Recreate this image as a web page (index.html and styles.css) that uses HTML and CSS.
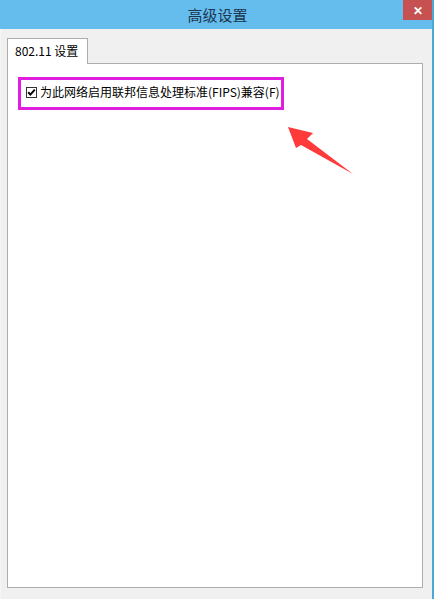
FILE: index.html
```html
<!DOCTYPE html>
<html lang="zh-CN">
<head>
<meta charset="utf-8">
<title>高级设置</title>
<link rel="stylesheet" href="styles.css">
</head>
<body>
<div class="window">
  <div class="titlebar">
    <span class="spacer"></span>
    <span class="title">高级设置</span>
    <span class="close-wrap"><span class="close">✕</span></span>
  </div>
  <div class="client">
    <div class="tabs">
      <div class="tab">802.11 设置</div>
    </div>
    <div class="panel">
      <div class="highlight">
        <span class="checkbox">
          <svg width="9" height="9" viewBox="0 0 9 9"><path d="M1.2 4.3 L3.4 6.6 L7.8 1.6" fill="none" stroke="#000" stroke-width="2"/></svg>
        </span>
        <span class="label">为此网络启用联邦信息处理标准(FIPS)兼容(F)</span>
      </div>
      <svg class="arrow" width="80" height="60" viewBox="0 0 80 60">
        <polygon points="0,0 25,6 19,12 65,47 13,18 8,21" fill="#ff3a3a"/>
      </svg>
    </div>
  </div>
</div>
</body>
</html>
```
FILE: styles.css
```css
* { box-sizing: border-box; }
html, body {
  margin: 0;
  padding: 0;
  width: 434px;
  height: 599px;
  overflow: hidden;
  background: #f0f0f0;
  font-family: "Noto Sans CJK SC", "Noto Sans", sans-serif;
}
.window {
  width: 434px;
  height: 599px;
  display: flex;
  flex-direction: column;
  border-right: 2px solid #4aa8d2;
  border-left: 1px solid #f6f6f6;
}
.titlebar {
  height: 29px;
  flex: none;
  background: #65bdee;
  display: grid;
  grid-template-columns: 1fr auto 1fr;
  align-items: center;
  margin-left: -1px;
}
.title {
  font-size: 15px;
  color: #1d3550;
  line-height: 29px;
  padding-left: 3px;
}
.close-wrap {
  justify-self: end;
  align-self: start;
}
.close {
  display: flex;
  align-items: center;
  justify-content: center;
  width: 29px;
  height: 20px;
  background: #c75050;
  color: #fff;
  font-size: 12px;
  font-weight: bold;
  line-height: 1;
}
.client {
  flex: 1;
  display: flex;
  flex-direction: column;
  padding: 9px 9px 11px 6px;
}
.tabs {
  display: flex;
  position: relative;
  z-index: 1;
  margin-bottom: -1px;
}
.tab {
  width: 81px;
  height: 26px;
  background: #fff;
  border: 1px solid #adadad;
  border-bottom: none;
  font-size: 12px;
  color: #000;
  padding-left: 7px;
  line-height: 24px;
}
.panel {
  flex: 1;
  background: #fff;
  border: 1px solid #adadad;
  position: relative;
  padding: 13px 0 0 10px;
}
.highlight {
  display: inline-flex;
  align-items: center;
  width: 266px;
  height: 33px;
  border: 3px solid #e01ee0;
  padding: 0 0 3px 5px;
  gap: 3px;
}
.checkbox {
  width: 11px;
  height: 11px;
  border: 1px solid #333;
  background: #fff;
  display: flex;
  align-items: center;
  justify-content: center;
  flex: none;
}
.checkbox svg { display: block; }
.label {
  font-size: 12px;
  color: #000;
  white-space: nowrap;
  line-height: 16px;
}
.arrow {
  position: absolute;
  left: 280px;
  top: 63px;
}
```
